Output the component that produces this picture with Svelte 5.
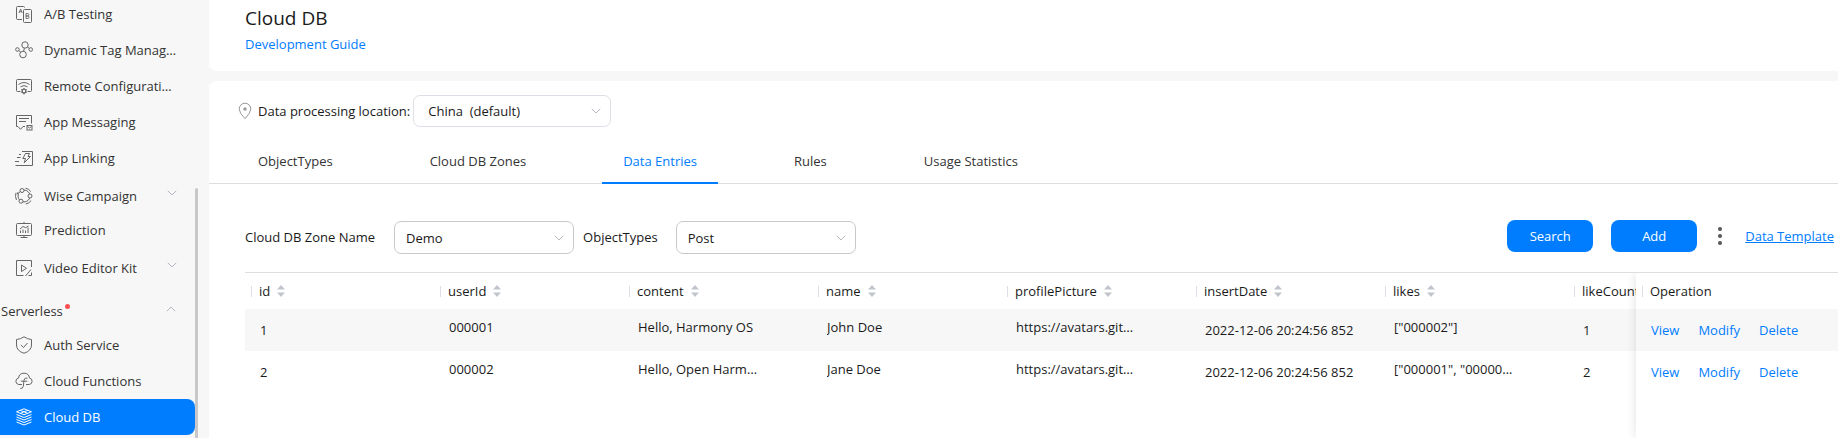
<script>
  const services = [
    { name: 'A/B Testing', icon: 'ab' },
    { name: 'Dynamic Tag Manager', icon: 'tag' },
    { name: 'Remote Configuration', icon: 'remote' },
    { name: 'App Messaging', icon: 'message' },
    { name: 'App Linking', icon: 'link' },
    { name: 'Wise Campaign', icon: 'campaign', group: true },
    { name: 'Prediction', icon: 'prediction' },
    { name: 'Video Editor Kit', icon: 'video', group: true }
  ];
  const serverless = [
    { name: 'Auth Service', icon: 'auth' },
    { name: 'Cloud Functions', icon: 'functions' },
    { name: 'Cloud DB', icon: 'db', active: true }
  ];
  const tabs = ['ObjectTypes', 'Cloud DB Zones', 'Data Entries', 'Rules', 'Usage Statistics'];
  let activeTab = $state('Data Entries');

  const columns = ['id', 'userId', 'content', 'name', 'profilePicture', 'insertDate', 'likes', 'likeCount'];
  const plain = ['id', 'insertDate', 'likeCount'];
  const avatar = 'https://avatars.github.com';
  const rows = [
    { id: 1, userId: '000001', content: 'Hello, Harmony OS', name: 'John Doe', profilePicture: avatar, insertDate: '2022-12-06 20:24:56 852', likes: '["000002"]', likeCount: 1 },
    { id: 2, userId: '000002', content: 'Hello, Open Harmony', name: 'Jane Doe', profilePicture: avatar, insertDate: '2022-12-06 20:24:56 852', likes: '["000001", "000003"]', likeCount: 2 }
  ];
</script>

{#snippet chevron()}
  <svg class="chevron" width="10" height="6" viewBox="0 0 10 6" aria-hidden="true"><path d="M.8.8 5 5 9.2.8" /></svg>
{/snippet}

{#snippet icon(kind)}
  <svg class="icon" width="18" height="18" viewBox="0 0 18 18" aria-hidden="true">
    {#if kind === 'ab'}
      <path d="M7 14.500H2.500a1 1 0 0 1-1-1v-11a1 1 0 0 1 1-1h6a1 1 0 0 1 1 1" />
      <rect x="8.500" y="4.500" width="8" height="13" rx="1" />
      <path d="m4 8 1.700-4L7.300 8M4.500 6.700h2.300M11 8.500v5h1.800a1.200 1.200 0 0 0 0-2.500H11h1.600a1.200 1.200 0 0 0 0-2.500z" stroke-width=".9" />
    {:else if kind === 'tag'}
      <circle cx="10" cy="4" r="3.200" /><circle cx="8" cy="13.500" r="3.300" />
      <circle cx="2.400" cy="8.500" r="1.800" /><circle cx="15.800" cy="8.500" r="1.800" />
      <path d="m9.300 7.200-.6 3M4 9.500l1.600 1.700M12.600 6l1.700 1.400" />
    {:else if kind === 'remote'}
      <path d="M5.500 14.500h-3a1 1 0 0 1-1-1v-10a1 1 0 0 1 1-1h13a1 1 0 0 1 1 1v10a1 1 0 0 1-1 1h-3" />
      <path d="M3.500 7.500q5.500-4 11 0M5.500 9.800q3.500-2.400 7 0" />
      <circle cx="9" cy="14" r="1.900" stroke-width="1.300" />
      <path d="M9 11v1M9 16v1.500M6.300 12.500l.9.500M10.800 15l.9.500M6.300 15.500l.9-.5M10.800 13l.9-.5" />
    {:else if kind === 'message'}
      <path d="M10 13.500H8l-2.500 2.800L3 13.500H1.500v-11h15v8M4 5.500h10M4 8.500h7" />
      <rect x="12" y="12.500" width="5" height="4.500" /><path d="m12.500 13.500 2 1.500 2-1.500" />
    {:else if kind === 'link'}
      <path d="M7 2.500h10.500v14H.5M4 5.500h2M2 8.500h3.500M0 12.500h4" />
      <path d="M10.500 4.500h4L13 7.500h2.500l-6.300 6.300 1.300-4.300H7.800z" />
    {:else if kind === 'campaign'}
      <circle cx="9" cy="9" r="6" />
      <g class="hollow"><circle cx="7" cy="3.500" r="2" /><circle cx="15" cy="9" r="2" /><circle cx="6" cy="14.200" r="2" /></g>
      <path d="M10.500 1.200q3.500.6 5.300 3.300M16.200 13.500a8.500 8.500 0 0 1-5.500 3.500M1.500 13A9 9 0 0 1 1 5.800M3 5.200l-.7 2" />
    {:else if kind === 'prediction'}
      <rect x="1.500" y="2.500" width="15" height="12" rx="1" />
      <path d="M9 .8v1.500M5.500 16.500h7M9 14.500v2M5.500 12V9.500M8 12V8.500M10.500 12V9.500M13 12V6.500M5 8l3-2.500 2.500 1.200L13.500 5" />
    {:else if kind === 'video'}
      <path d="M16.500 8V1.500h-15v15h7M6.500 6v6.500l5-3.200zM16 10.500 10.500 17M13.500 16.500h3v-3" />
    {:else if kind === 'auth'}
      <path d="M9 .8q3.500 2.400 7.500 2.700v5.500q0 5.800-7.500 8.300Q1.500 14.800 1.500 9V3.500Q5.500 3.200 9 .8zM5.800 9l2.700 2.500 4-4.500" />
    {:else if kind === 'functions'}
      <path d="M7 12.500H3.800A3.300 3.300 0 0 1 3.500 6q.6-4.800 5.500-4.800T14.500 6a3.300 3.300 0 0 1-.3 6.500H11" />
      <path d="M12.500 6.200q-3-1-3.500 2l-.7 6q-.5 2.700-3 2.300M5.800 9.200h6.500" />
    {:else}
      <path d="m9 .8 7.500 3L9 6.800l-7.500-3zM1.500 6.500 9 9.500l7.500-3M1.500 9 9 12l7.500-3M1.500 11.500l7.500 3 7.500-3M1.500 14 9 17l7.500-3M5.500 2.400l7.300 3M12.500 2.400l-7.300 3" />
    {/if}
  </svg>
{/snippet}

{#snippet item(entry)}
  <li>
    <a href="#top" class="item" class:active={entry.active} class:group={entry.group}>
      {@render icon(entry.icon)}
      <span class="item-name">{entry.name}</span>
      {#if entry.group}{@render chevron()}{/if}
    </a>
  </li>
{/snippet}

<div class="page">
  <nav class="sidebar" aria-label="Services">
    <div class="menu">
      <ul>
        {#each services as entry}{@render item(entry)}{/each}
      </ul>
      <button class="section" aria-expanded="true">
        <span>Serverless</span><i class="dot"></i>{@render chevron()}
      </button>
      <ul>
        {#each serverless as entry}{@render item(entry)}{/each}
      </ul>
    </div>
    <div class="thumb"></div>
  </nav>

  <main>
    <header class="card heading">
      <h1>Cloud DB</h1>
      <a href="#top">Development Guide</a>
    </header>

    <section class="card body">
      <div class="location">
        <svg width="14" height="18" viewBox="0 0 14 18" aria-hidden="true">
          <path d="M7 16.500Q1.200 11 1.200 7a5.800 5.800 0 0 1 11.600 0Q12.800 11 7 16.500z" /><circle cx="7" cy="7" r="1.700" />
        </svg>
        <label for="location">Data processing location:</label>
        <span class="select region">
          <select id="location"><option>China&nbsp; (default)</option></select>{@render chevron()}
        </span>
      </div>

      <div class="tabs" role="tablist">
        {#each tabs as tab}
          <button role="tab" aria-selected={tab === activeTab} onclick={() => (activeTab = tab)}>{tab}</button>
        {/each}
      </div>

      <div class="filters">
        <label for="zone">Cloud DB Zone Name</label>
        <span class="select"><select id="zone"><option>Demo</option></select>{@render chevron()}</span>
        <label for="type">ObjectTypes</label>
        <span class="select"><select id="type"><option>Post</option></select>{@render chevron()}</span>
        <div class="actions">
          <button class="primary">Search</button>
          <button class="primary">Add</button>
          <button class="more" aria-label="More"><i></i><i></i><i></i></button>
          <a href="#top">Data Template</a>
        </div>
      </div>

      <div class="table-area">
        <table>
          <thead>
            <tr>
              {#each columns as column}
                <th scope="col">
                  <span class="head">{column}
                    <svg width="8" height="12" viewBox="0 0 8 12" aria-hidden="true"><path d="M0 4.500 4 0l4 4.500zM0 7.500 4 12l4-4.500z" /></svg>
                  </span>
                </th>
              {/each}
              <th scope="col" class="fixed"><span class="head">Operation</span></th>
            </tr>
          </thead>
          <tbody>
            {#each rows as row}
              <tr>
                {#each columns as column}
                  <td class:value={!plain.includes(column)}><div class="clip">{row[column]}</div></td>
                {/each}
                <td class="fixed">
                  <div class="links"><a href="#top">View</a><a href="#top">Modify</a><a href="#top">Delete</a></div>
                </td>
              </tr>
            {/each}
          </tbody>
        </table>
        <div class="edge"></div>
      </div>
    </section>
  </main>
</div>

<style>
  :global(body) {
    background: #f7f7f7;
  }
  .page {
    display: grid;
    grid-template-columns: 209px minmax(0, 1fr);
    height: 100vh;
    overflow: hidden;
    font: 13px/20px 'Open Sans', 'Noto Sans', sans-serif;
    color: #1a1a1a;
  }
  button,
  select {
    font: inherit;
    color: inherit;
    margin: 0;
    cursor: pointer;
  }
  button {
    border: 0;
    padding: 0;
    background: none;
  }
  a {
    color: #007dff;
    text-decoration: none;
  }
  svg {
    flex: none;
    fill: none;
    stroke: currentColor;
  }
  .chevron {
    color: #b4b8c0;
  }

  .sidebar {
    position: relative;
    min-height: 0;
    overflow: hidden;
  }
  .menu {
    margin: -4px 14px 0 0;
  }
  ul {
    list-style: none;
    margin: 0;
    padding: 0;
  }
  .item {
    display: flex;
    align-items: center;
    box-sizing: border-box;
    height: 36px;
    padding: 0 18px 0 15px;
    color: #333;
    border-radius: 0 8px 8px 0;
  }
  .icon {
    margin-right: 11px;
    color: #666;
  }
  .item-name {
    width: 134px;
    overflow: hidden;
    text-overflow: ellipsis;
    white-space: nowrap;
  }
  .group {
    padding-top: 4px;
  }
  .group .item-name {
    width: 123px;
  }
  .group .chevron {
    margin-bottom: 6px;
  }
  .hollow circle {
    fill: #f7f7f7;
  }
  .active,
  .active .icon {
    color: #fff;
  }
  .active {
    background: #007dff;
  }
  .section {
    display: flex;
    align-items: center;
    width: 100%;
    height: 43px;
    padding: 11px 19px 0 1px;
    color: #333;
  }
  .section .chevron {
    margin: 0 0 4px auto;
    transform: rotate(180deg);
  }
  .dot {
    width: 5px;
    height: 5px;
    margin: 0 0 9px 2px;
    border-radius: 50%;
    background: #fa4f4f;
  }
  .thumb {
    position: absolute;
    top: 188px;
    bottom: 0;
    right: 11px;
    width: 3px;
    border-radius: 2px 2px 0 0;
    background: #c8c8c8;
  }

  main {
    display: flex;
    flex-direction: column;
    gap: 10px;
    min-height: 0;
  }
  .card {
    background: #fff;
  }
  .heading {
    padding: 4px 36px 17px;
    border-radius: 0 0 0 8px;
  }
  h1 {
    margin: 0 0 2px;
    font-size: 19px;
    line-height: 28px;
    font-weight: 400;
  }
  .body {
    display: flex;
    flex: 1;
    flex-direction: column;
    min-height: 0;
    border-radius: 8px 0 0 0;
  }
  .location {
    display: flex;
    align-items: center;
    padding: 14px 0 0 29px;
  }
  .location > svg {
    margin-right: 6px;
    color: #999;
  }
  .location circle {
    fill: #999;
    stroke: none;
  }
  .select {
    display: inline-grid;
    align-items: center;
    width: 180px;
  }
  .select select,
  .select .chevron {
    grid-area: 1 / 1;
  }
  .select .chevron {
    justify-self: end;
    margin-right: 10px;
    pointer-events: none;
  }
  select {
    appearance: none;
    width: 100%;
    height: 33px;
    padding: 0 11px;
    border: 1px solid #c8c9cc;
    border-radius: 7px;
    background: #fff;
  }
  .region {
    width: 198px;
    margin-left: 3px;
  }
  .region select {
    height: 32px;
    padding: 0 14px;
    border-color: #dcdfe6;
  }
  .tabs {
    display: flex;
    gap: 55px;
    margin-top: 12px;
    padding-left: 28px;
    border-bottom: 1px solid #dcdfe2;
  }
  .tabs button {
    height: 45px;
    margin-bottom: -1px;
    padding: 0 21px;
    border-bottom: 2px solid transparent;
    color: #333;
  }
  .tabs [aria-selected='true'] {
    color: #007dff;
    border-color: #007dff;
  }
  .filters {
    display: flex;
    align-items: flex-end;
    padding: 36px 4px 18px 36px;
  }
  .filters label {
    line-height: 33px;
  }
  .filters .select {
    margin: 0 8px 0 18px;
  }
  .filters .select:first-of-type {
    margin: 0 9px 0 19px;
  }
  .actions {
    display: flex;
    align-items: center;
    margin: 0 0 2px auto;
  }
  .primary {
    width: 86px;
    height: 32px;
    margin-right: 18px;
    border-radius: 8px;
    background: #007dff;
    color: #fff;
  }
  .more {
    display: grid;
    gap: 3px;
    margin: 0 23px 0 3px;
  }
  .more i {
    width: 4px;
    height: 4px;
    border-radius: 50%;
    background: #555;
  }
  .actions a {
    text-decoration: underline;
  }

  .table-area {
    position: relative;
    flex: 1;
    margin-left: 36px;
    overflow: hidden;
    border-top: 1px solid #dcdfe2;
  }
  table {
    width: 1714px;
    table-layout: fixed;
    border-collapse: collapse;
  }
  th,
  td {
    width: 189px;
    box-sizing: border-box;
    text-align: left;
    font-weight: 400;
  }
  th {
    height: 36px;
    padding: 0 6px;
    background: #fff;
  }
  td {
    height: 42px;
    padding: 0 15px;
  }
  .value {
    padding-bottom: 6px;
  }
  .fixed {
    position: sticky;
    right: 0;
    width: 202px;
    background: #fff;
  }
  tbody tr:nth-child(odd) td {
    background: #f7f7f7;
  }
  .head {
    display: flex;
    align-items: center;
    gap: 7px;
  }
  .head::before {
    content: '';
    width: 1px;
    height: 11px;
    background: #dcdfe6;
  }
  .head svg {
    fill: #c0c4cc;
    stroke: none;
  }
  .clip {
    overflow: hidden;
    text-overflow: ellipsis;
    white-space: nowrap;
    max-width: 124px;
  }
  td:not(.value) .clip {
    max-width: none;
  }
  .links {
    display: flex;
    gap: 19px;
  }
  .edge {
    position: absolute;
    inset: 0 0 0 auto;
    width: 202px;
    box-shadow: 0 0 10px rgb(0 0 0 / 12%);
    pointer-events: none;
  }
</style>
